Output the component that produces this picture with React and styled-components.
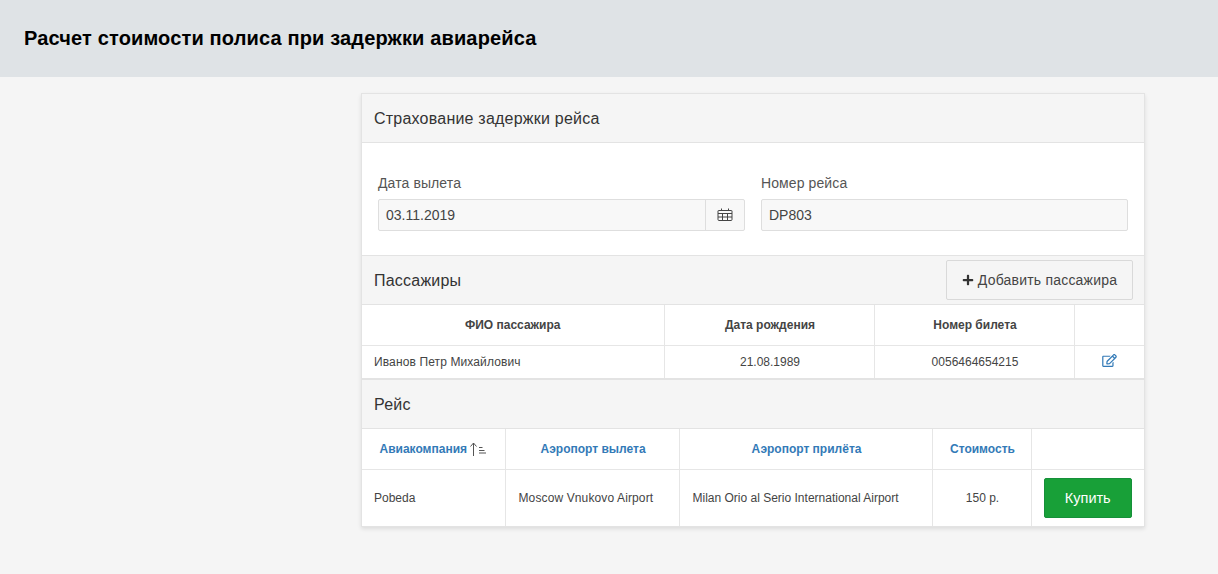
import React from "react";
import styled, { createGlobalStyle } from "styled-components";
import { FaPlus, FaRegEdit } from "react-icons/fa";

const GlobalStyle = createGlobalStyle`
  * {
    box-sizing: border-box;
  }

  html,
  body {
    margin: 0;
    padding: 0;
    background: #f5f5f5;
    color: #333;
    font-family: "Liberation Sans", Arial, sans-serif;
  }
`;

const Page = styled.div`
  min-height: 574px;
  background: #f5f5f5;
`;

const TopBar = styled.header`
  height: 77px;
  padding-left: 24px;
  display: flex;
  align-items: center;
  background: #dfe3e6;
`;

const Title = styled.h1`
  margin: 0;
  font-size: 20px;
  font-weight: 700;
  letter-spacing: 0.15px;
  color: #000;
`;

const Content = styled.main`
  padding: 16px 73px 0 361px;
`;

const Panel = styled.section`
  width: 784px;
  background: #fff;
  border: 1px solid #e3e3e3;
  box-shadow: 0 2px 4px rgba(0, 0, 0, 0.1);
`;

const PanelHeading = styled.div`
  height: 49px;
  padding: 0 11px 0 12px;
  display: flex;
  align-items: center;
  justify-content: space-between;
  background: #f5f5f5;
  border-bottom: 1px solid #e3e3e3;
`;

const HeadingText = styled.h2`
  margin: 0;
  padding-top: 2px;
  font-size: 16px;
  font-weight: 400;
  letter-spacing: 0.22px;
  color: #333;
`;

const Form = styled.div`
  height: 113px;
  padding: 32px 16px 0;
  display: grid;
  grid-template-columns: 367px 367px;
  column-gap: 16px;
  border-bottom: 1px solid #e3e3e3;
`;

const Field = styled.label`
  display: flex;
  flex-direction: column;
`;

const FieldLabel = styled.span`
  height: 16px;
  margin-bottom: 8px;
  font-size: 14px;
  line-height: 16px;
  letter-spacing: 0.1px;
  color: #555;
`;

const InputRow = styled.div`
  height: 32px;
  display: flex;
  background: #f8f8f8;
  border: 1px solid #dedede;
  border-radius: 2px;
`;

const InputValue = styled.span`
  flex: 1;
  padding-left: 7px;
  font-size: 14px;
  line-height: 30px;
  color: #444;
`;

const InputAddon = styled.span`
  width: 39px;
  padding-bottom: 2px;
  display: flex;
  align-items: center;
  justify-content: center;
  border-left: 1px solid #dedede;
  color: #444;
`;

const AddButton = styled.button`
  width: 187px;
  height: 40px;
  padding: 0;
  display: flex;
  align-items: center;
  justify-content: center;
  gap: 4px;
  background: #f5f5f5;
  border: 1px solid #d9d9d9;
  border-radius: 2px;
  font: inherit;
  font-size: 14px;
  letter-spacing: 0.2px;
  color: #444;

  svg {
    width: 12px;
    height: 12px;
    color: #333;
  }
`;

const Table = styled.table`
  width: 100%;
  table-layout: fixed;
  border-collapse: collapse;
  font-size: 12px;
  color: #444;
`;

const Column = styled.col`
  width: ${(props) => props.$width}px;
`;

const HeadCell = styled.th`
  height: 40px;
  padding: 0;
  font-size: 12px;
  font-weight: 700;
  text-align: center;
  color: ${(props) => (props.$link ? "#337ab7" : "#444")};
  border-right: 1px solid #e6e6e6;
  border-bottom: 1px solid #e6e6e6;

  &:not(:first-child) {
    padding-left: 2px;
  }

  &:last-child {
    border-right: 0;
  }
`;

const Cell = styled.td`
  height: ${(props) => props.$height}px;
  padding: 0 12px;
  text-align: ${(props) => (props.$center ? "center" : "left")};
  letter-spacing: ${(props) => (props.$wide ? "0.12px" : "normal")};
  white-space: nowrap;
  border-right: 1px solid #e6e6e6;

  &:not(:first-child) {
    padding-left: ${(props) => (props.$center ? "14px" : "13px")};
  }

  &:last-child {
    padding-left: 0;
    padding-right: 0;
    border-right: 0;
  }
`;

const PassengersTable = styled(Table)`
  border-bottom: 2px solid #e3e3e3;
`;

const EditIcon = styled(FaRegEdit)`
  width: 15px;
  height: 13px;
  display: block;
  margin: 0 auto 2px;
  color: #337ab7;
`;

const SortLabel = styled.span`
  display: inline-flex;
  align-items: center;
  gap: 3px;
`;

const BuyButton = styled.button`
  width: 88px;
  height: 40px;
  display: block;
  margin: 0 auto;
  padding: 0;
  background: #18a038;
  border: 1px solid #16903a;
  border-radius: 2px;
  font: inherit;
  font-size: 14.5px;
  color: #fff;
`;

const CalendarIcon = () => (
  <svg width="16" height="13" viewBox="0 0 16 13" fill="none" stroke="currentColor" strokeWidth="1">
    <path d="M1.500 2.500h13a.5.5 0 0 1 .5.5v8.500a1 1 0 0 1-1 1H2a1 1 0 0 1-1-1V3a.5.5 0 0 1 .5-.5z" />
    <path d="M1 5.500h14M1 9h14M5.500 5.500v7M10.500 5.500v7M4.500 .5v2M11.500 .5v2" />
  </svg>
);

const SortIcon = () => (
  <svg width="17" height="14" viewBox="0 0 17 14" fill="none" stroke="#555" strokeWidth="1">
    <path d="M3.500 14V1M.5 4.500 3.500 1l3 3.500" />
    <path d="M9 5.500h3.500M9 8.500h5.500M9 11h7" />
  </svg>
);

const passengerColumns = [302, 210, 200, 70];
const flightColumns = [143, 174, 253, 99, 113];

const App = () => {
  return (
    <Page>
      <GlobalStyle />
      <TopBar>
        <Title>Расчет стоимости полиса при задержки авиарейса</Title>
      </TopBar>
      <Content>
        <Panel>
          <PanelHeading>
            <HeadingText>Страхование задержки рейса</HeadingText>
          </PanelHeading>
          <Form>
            <Field>
              <FieldLabel>Дата вылета</FieldLabel>
              <InputRow>
                <InputValue>03.11.2019</InputValue>
                <InputAddon>
                  <CalendarIcon />
                </InputAddon>
              </InputRow>
            </Field>
            <Field>
              <FieldLabel>Номер рейса</FieldLabel>
              <InputRow>
                <InputValue>DP803</InputValue>
              </InputRow>
            </Field>
          </Form>

          <PanelHeading>
            <HeadingText>Пассажиры</HeadingText>
            <AddButton>
              <FaPlus />
              Добавить пассажира
            </AddButton>
          </PanelHeading>
          <PassengersTable>
            <colgroup>
              {passengerColumns.map((width, i) => (
                <Column key={i} $width={width} />
              ))}
            </colgroup>
            <thead>
              <tr>
                <HeadCell>ФИО пассажира</HeadCell>
                <HeadCell>Дата рождения</HeadCell>
                <HeadCell>Номер билета</HeadCell>
                <HeadCell />
              </tr>
            </thead>
            <tbody>
              <tr>
                <Cell $height={34} $wide>
                  Иванов Петр Михайлович
                </Cell>
                <Cell $height={34} $center>
                  21.08.1989
                </Cell>
                <Cell $height={34} $center>
                  0056464654215
                </Cell>
                <Cell $height={34} $center>
                  <EditIcon />
                </Cell>
              </tr>
            </tbody>
          </PassengersTable>

          <PanelHeading>
            <HeadingText>Рейс</HeadingText>
          </PanelHeading>
          <Table>
            <colgroup>
              {flightColumns.map((width, i) => (
                <Column key={i} $width={width} />
              ))}
            </colgroup>
            <thead>
              <tr>
                <HeadCell $link>
                  <SortLabel>
                    Авиакомпания
                    <SortIcon />
                  </SortLabel>
                </HeadCell>
                <HeadCell $link>Аэропорт вылета</HeadCell>
                <HeadCell $link>Аэропорт прилёта</HeadCell>
                <HeadCell $link>Стоимость</HeadCell>
                <HeadCell />
              </tr>
            </thead>
            <tbody>
              <tr>
                <Cell $height={57}>Pobeda</Cell>
                <Cell $height={57} $wide>
                  Moscow Vnukovo Airport
                </Cell>
                <Cell $height={57}>Milan Orio al Serio International Airport</Cell>
                <Cell $height={57} $center>
                  150 р.
                </Cell>
                <Cell $height={57} $center>
                  <BuyButton>Купить</BuyButton>
                </Cell>
              </tr>
            </tbody>
          </Table>
        </Panel>
      </Content>
    </Page>
  );
};

export default App;
